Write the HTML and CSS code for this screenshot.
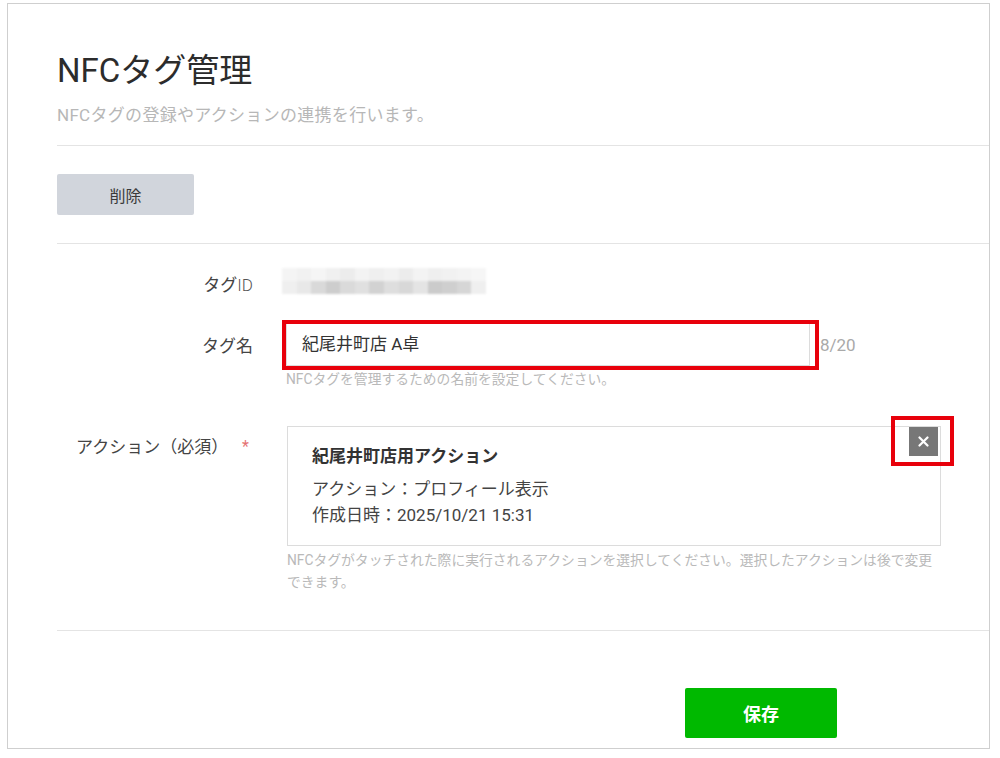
FILE: index.html
```html
<!DOCTYPE html>
<html lang="ja">
<head>
<meta charset="utf-8">
<title>NFCタグ管理</title>
<link rel="stylesheet" href="styles.css">
</head>
<body>
<div class="frame">
  <header class="head">
    <h1 class="title">NFCタグ管理</h1>
    <p class="subtitle">NFCタグの登録やアクションの連携を行います。</p>
  </header>

  <div class="toolbar">
    <button class="btn-delete" type="button">削除</button>
  </div>

  <div class="form">
    <div class="row row-id">
      <div class="label">タグ<span class="latin">ID</span></div>
      <div class="field">
        <div class="redacted" aria-label="hidden id">
          <span class="c1"></span><span class="c2"></span><span class="c3"></span><span class="c4"></span><span class="c5"></span><span class="c6"></span><span class="c7"></span><span class="c8"></span><span class="c9"></span><span class="c10"></span><span class="c11"></span><span class="c12"></span><span class="c13"></span><span class="c14"></span>
          <span class="d1"></span><span class="d2"></span><span class="d3"></span><span class="d4"></span><span class="d5"></span><span class="d6"></span><span class="d7"></span><span class="d8"></span><span class="d9"></span><span class="d10"></span><span class="d11"></span><span class="d12"></span><span class="d13"></span><span class="d14"></span>
        </div>
      </div>
    </div>

    <div class="row row-name">
      <div class="label">タグ名</div>
      <div class="field">
        <div class="input-line">
          <div class="input-wrap">
            <div class="input">紀尾井町店 A卓</div>
          </div>
          <span class="counter">8/20</span>
        </div>
        <p class="hint hint-name">NFCタグを管理するための名前を設定してください。</p>
      </div>
    </div>

    <div class="row row-action">
      <div class="label label-action"><span>アクション（必須）</span><span class="req">*</span></div>
      <div class="field">
        <div class="card">
          <div class="card-title">紀尾井町店用アクション</div>
          <div class="card-line">アクション：プロフィール表示</div>
          <div class="card-line">作成日時：2025/10/21 15:31</div>
          <button class="close" type="button" aria-label="削除">
            <svg width="11" height="11" viewBox="0 0 11 11"><path d="M1.5 1.5 L9.5 9.5 M9.5 1.5 L1.5 9.5" stroke="#fff" stroke-width="2.2" stroke-linecap="round"/></svg>
          </button>
        </div>
        <p class="hint hint-action">NFCタグがタッチされた際に実行されるアクションを選択してください。選択したアクションは後で変更できます。</p>
      </div>
    </div>
  </div>

  <div class="footer">
    <button class="btn-save" type="button">保存</button>
  </div>
</div>
</body>
</html>
```

FILE: styles.css
```css
* { box-sizing: border-box; }

html, body {
  margin: 0;
  padding: 0;
  background: #fff;
}

body {
  font-family: Roboto, "Noto Sans CJK JP", "Noto Sans", sans-serif;
  color: #333;
}

.frame {
  margin: 3px 0 0 7px;
  width: 983px;
  height: 746px;
  border: 1px solid #cfcfcf;
  padding-left: 49px;
  background: #fff;
}

/* header */
.head {
  padding-top: 47px;
  padding-bottom: 18px;
  border-bottom: 1px solid #e4e4e4;
}

.title {
  margin: 0;
  font-size: 33px;
  line-height: 40px;
  font-weight: 400;
  color: #2c2c2c;
}

.subtitle {
  margin: 12px 0 0;
  font-size: 17px;
  line-height: 24px;
  color: #b7b7b7;
  letter-spacing: 0.3px;
}

/* toolbar */
.toolbar {
  padding: 28px 0 28px;
  border-bottom: 1px solid #e4e4e4;
}

.btn-delete {
  display: block;
  width: 137px;
  height: 41px;
  border: none;
  border-radius: 2px;
  background: #d1d5dc;
  color: #3a3a3a;
  font-family: inherit;
  font-size: 16px;
  padding: 0;
}

/* form */
.form {
  padding: 24px 0 37px;
  border-bottom: 1px solid #e4e4e4;
}

.row {
  display: grid;
  grid-template-columns: 196px 1fr;
  column-gap: 33px;
}

.label {
  font-size: 17px;
  line-height: 24px;
  color: #444;
  text-align: right;
}

.latin {
  font-weight: 300;
  color: #555;
}

.row-id {
  align-items: start;
}

.row-id .label {
  padding-top: 5px;
}

.redacted {
  display: grid;
  grid-template-columns: repeat(14, 1fr);
  grid-template-rows: 13px 13px;
  width: 204px;
  margin-left: -4px;
  filter: blur(1.2px);
}

.c1 { background: #f4f4f4; } .c2 { background: #f1f1f1; } .c3 { background: #f5f5f5; } .c4 { background: #f0f0f0; }
.c5 { background: #ececec; } .c6 { background: #f3f3f3; } .c7 { background: #efefef; } .c8 { background: #f2f2f2; }
.c9 { background: #ececec; } .c10 { background: #f3f3f3; } .c11 { background: #efefef; } .c12 { background: #f1f1f1; }
.c13 { background: #f3f3f3; } .c14 { background: #f6f6f6; }
.d1 { background: #efefef; } .d2 { background: #e8e8e8; } .d3 { background: #d9d9d9; } .d4 { background: #cdcdcd; }
.d5 { background: #dadada; } .d6 { background: #e0e0e0; } .d7 { background: #d2d2d2; } .d8 { background: #dedede; }
.d9 { background: #d8d8d8; } .d10 { background: #e4e4e4; } .d11 { background: #cbcbcb; } .d12 { background: #cfcfcf; }
.d13 { background: #d6d6d6; } .d14 { background: #efefef; }

.row-name {
  margin-top: 26px;
}

.row-name .label {
  line-height: 43px;
  padding-top: 2px;
}

.input-line {
  display: flex;
  align-items: center;
}

.input-wrap {
  position: relative;
}

.input-wrap::after {
  content: "";
  position: absolute;
  top: -3px;
  left: -4px;
  right: -9px;
  bottom: -4px;
  border: 4px solid #e8000b;
  pointer-events: none;
}

.input {
  width: 524px;
  height: 43px;
  border: 1px solid #dcdcdc;
  padding-left: 15px;
  font-size: 17px;
  line-height: 41px;
  color: #333;
}

.counter {
  margin-left: 10px;
  font-size: 17px;
  color: #a9a9a9;
}

.hint {
  margin: 2px 0 0;
  font-size: 13.8px;
  line-height: 22px;
  color: #b9b9b9;
}

.row-action {
  margin-top: 36px;
}

.label-action {
  display: flex;
  justify-content: space-between;
  padding-left: 19px;
  padding-top: 9px;
}

.req {
  color: #e57373;
  font-size: 16px;
  margin-right: 4px;
}

.field {
  min-width: 0;
}

.card {
  position: relative;
  width: 654px;
  margin-left: 1px;
  border: 1px solid #dcdcdc;
  padding: 17px 24px 17px;
}

.card-title {
  font-size: 17px;
  line-height: 24px;
  font-weight: 700;
  color: #333;
  margin-bottom: 8px;
}

.card-line {
  font-size: 17px;
  line-height: 26px;
  color: #444;
}

.close {
  position: absolute;
  top: 0;
  right: 2px;
  width: 29px;
  height: 29px;
  border: none;
  padding: 0;
  background: #777;
  display: flex;
  align-items: center;
  justify-content: center;
}

.close::after {
  content: "";
  position: absolute;
  top: -11px;
  left: -18px;
  right: -16px;
  bottom: -10px;
  border: 4px solid #e8000b;
  pointer-events: none;
}

.hint-action {
  margin-top: 3px;
  margin-left: 1px;
  width: 650px;
}

/* footer */
.footer {
  padding-top: 57px;
  padding-left: 628px;
}

.btn-save {
  display: block;
  width: 152px;
  height: 50px;
  border: none;
  border-radius: 2px;
  background: #00b900;
  color: #fff;
  font-family: inherit;
  font-size: 18px;
  font-weight: 700;
  padding: 0;
}
```
